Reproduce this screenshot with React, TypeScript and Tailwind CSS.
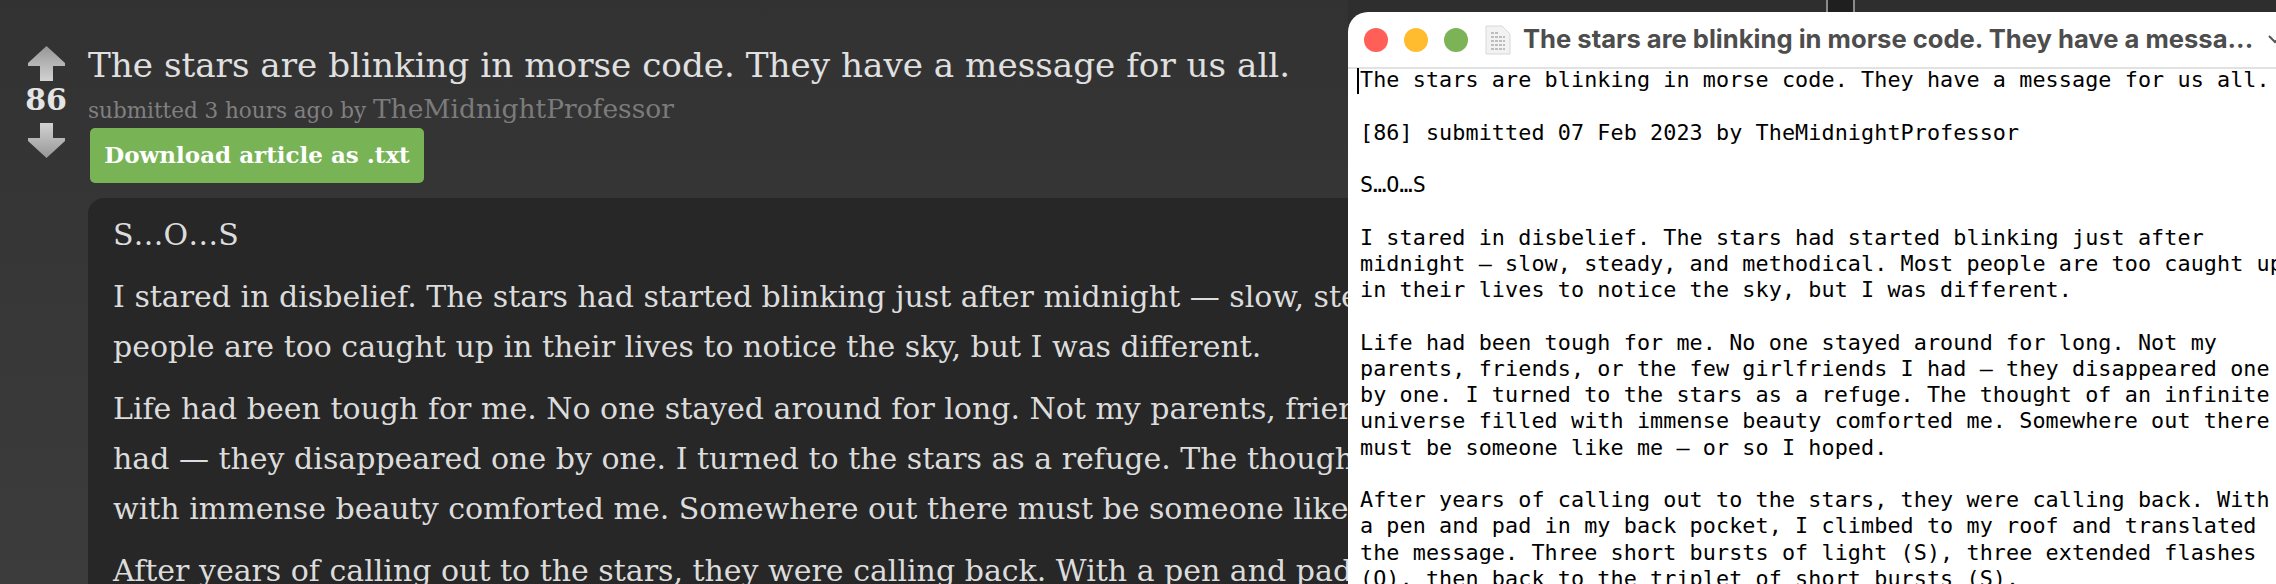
const serif = "font-['DejaVu_Serif',serif]";

const paragraphs = [
  ["S…O…S"],
  [
    "I stared in disbelief. The stars had started blinking just after midnight — slow, steady, and methodical. Most",
    "people are too caught up in their lives to notice the sky, but I was different.",
  ],
  [
    "Life had been tough for me. No one stayed around for long. Not my parents, friends, or the few girlfriends I",
    "had — they disappeared one by one. I turned to the stars as a refuge. The thought of an infinite universe filled",
    "with immense beauty comforted me. Somewhere out there must be someone like me — or so I hoped.",
  ],
  ["After years of calling out to the stars, they were calling back. With a pen and pad in my back pocket, I climbed"],
];

const textFile = `The stars are blinking in morse code. They have a message for us all.

[86] submitted 07 Feb 2023 by TheMidnightProfessor

S…O…S

I stared in disbelief. The stars had started blinking just after
midnight — slow, steady, and methodical. Most people are too caught up
in their lives to notice the sky, but I was different.

Life had been tough for me. No one stayed around for long. Not my
parents, friends, or the few girlfriends I had — they disappeared one
by one. I turned to the stars as a refuge. The thought of an infinite
universe filled with immense beauty comforted me. Somewhere out there
must be someone like me — or so I hoped.

After years of calling out to the stars, they were calling back. With
a pen and pad in my back pocket, I climbed to my roof and translated
the message. Three short bursts of light (S), three extended flashes
(O), then back to the triplet of short bursts (S).`;

function Arrow({ down }: { down?: boolean }) {
  const id = down ? "arrowDown" : "arrowUp";
  return (
    <svg width="37" height="35" viewBox="0 0 37 35" className={down ? "rotate-180" : ""}>
      <defs>
        <linearGradient id={id} x1="0" y1="0" x2="0" y2="1">
          <stop offset="0" stopColor="#969696" />
          <stop offset="1" stopColor="#d2d2d2" />
        </linearGradient>
      </defs>
      <path d="M18.5 0 L37 17 V20 H25 V35 H12 V20 H0 V17 Z" fill={`url(#${id})`} />
    </svg>
  );
}

function Votes() {
  return (
    <div className="flex w-[48px] flex-col items-center pt-[46px]">
      <Arrow />
      <div className="h-[42px] text-[30px] leading-[38px] font-bold text-[#e4e4e4]">86</div>
      <Arrow down />
    </div>
  );
}

function TextEditWindow() {
  return (
    <div className="absolute top-[12px] left-[1348px] flex h-[572px] w-[928px] flex-col overflow-hidden rounded-tl-[20px] bg-white">
      <div className="flex h-[57px] shrink-0 items-center border-b-2 border-[#e2e2e2] pl-[16px] font-['Inter',sans-serif]">
        <span className="h-6 w-6 shrink-0 rounded-full bg-[#ff5f57]" />
        <span className="ml-4 h-6 w-6 shrink-0 rounded-full bg-[#febc2e]" />
        <span className="ml-4 h-6 w-6 shrink-0 rounded-full bg-[#7cb356]" />
        <svg width="26" height="30" viewBox="0 0 26 30" className="ml-[17px] shrink-0">
          <path d="M1 1 H17 L25 9 V29 H1 Z" fill="#f2f2f2" stroke="#d8d8d8" />
          <path d="M6 8 H14 M6 12 H20 M6 16 H20 M6 20 H20 M6 24 H20" stroke="#bdbdbd" strokeWidth="2" strokeDasharray="3 1" />
        </svg>
        <span className="ml-[12px] text-[25.6px] font-bold whitespace-nowrap text-[#4d4d4d]">
          The stars are blinking in morse code. They have a messa...
        </span>
        <svg width="14" height="9" viewBox="0 0 14 9" className="ml-[15px] shrink-0">
          <path d="M1 1 L7 7 L13 1" fill="none" stroke="#555555" strokeWidth="2" />
        </svg>
      </div>
      <pre className="relative -mt-[2px] pl-[12px] font-['DejaVu_Sans_Mono',monospace] text-[21.75px] leading-[26.25px] tracking-[0.09px] text-black">
        <span className="absolute top-[1px] left-[9px] h-[26px] w-[2px] bg-black" />
        {textFile}
      </pre>
    </div>
  );
}

export default function App() {
  return (
    <div className={`relative flex h-[584px] w-[2276px] overflow-hidden bg-[#2e2e2e] ${serif}`}>
      <div className="flex h-full w-[1348px] shrink-0 bg-gradient-to-b from-[#323232] to-[#3c3c3c] pl-[22px]">
        <Votes />
        <div className="min-w-0 flex-1 pt-[43px] pl-[18px]">
          <h1 className="text-[34.2px] leading-[44px] whitespace-nowrap text-[#e0e0e0]">
            The stars are blinking in morse code. They have a message for us all.
          </h1>
          <div className="mt-[5px] text-[21.5px] leading-[34px] whitespace-nowrap text-[#808080]">
            submitted 3 hours ago by <span className="text-[26.5px] text-[#7b7b7b]">TheMidnightProfessor</span>
          </div>
          <button className="ml-[2px] flex h-[55px] w-[334px] items-center justify-center rounded-[5px] bg-[#78b356] text-[23px] font-bold text-white">
            Download article as .txt
          </button>
          <div className="mt-[15px] h-[400px] rounded-tl-[16px] bg-[#272727] pt-[12px] pl-[25px] text-[30px] leading-[50px] whitespace-nowrap text-[#dcdcdc]">
            {paragraphs.map((lines, i) => (
              <p key={i} className="mb-[12px]">
                {lines.map((line, j) => (
                  <span key={j} className="block">
                    {line}
                  </span>
                ))}
              </p>
            ))}
          </div>
        </div>
      </div>
      <div className="ml-[478px] h-full w-[29px] border-x-2 border-[#8a8a8a] bg-[#1f1f1f]" />
      <TextEditWindow />
    </div>
  );
}
